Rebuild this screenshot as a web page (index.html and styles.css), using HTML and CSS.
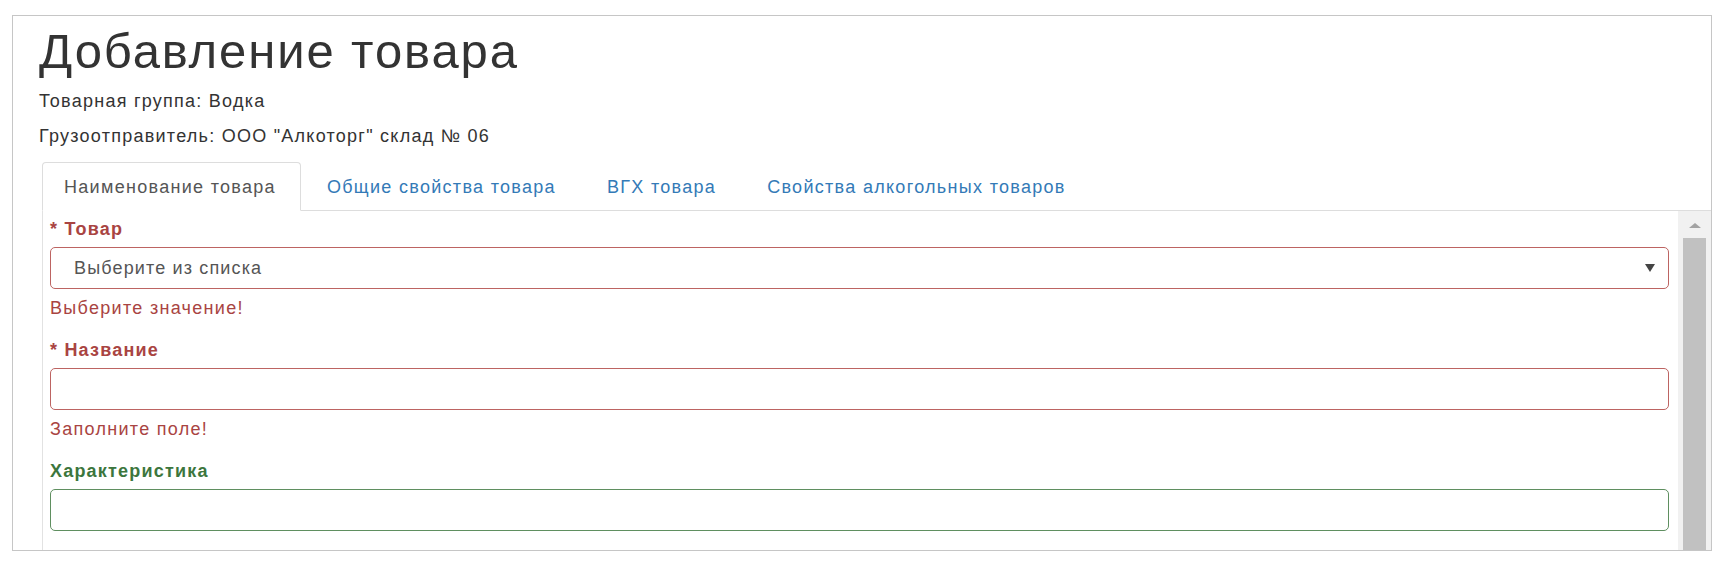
FILE: index.html
```html
<!DOCTYPE html>
<html lang="ru">
<head>
<meta charset="utf-8">
<title>Добавление товара</title>
<link rel="stylesheet" href="styles.css">
</head>
<body>
<div class="frame">
  <div class="header">
    <h1 class="title">Добавление товара</h1>
    <p class="meta meta-first">Товарная группа: Водка</p>
    <p class="meta meta-second">Грузоотправитель: ООО "Алкоторг" склад № 06</p>
  </div>
  <div class="tabs-area">
    <ul class="tabs">
      <li class="tab active"><a class="tab-link">Наименование товара</a></li>
      <li class="tab"><a class="tab-link">Общие свойства товара</a></li>
      <li class="tab"><a class="tab-link">ВГХ товара</a></li>
      <li class="tab"><a class="tab-link">Свойства алкогольных товаров</a></li>
    </ul>
    <div class="pane">
      <div class="pane-body">
        <div class="field has-error">
          <label class="field-label">* Товар</label>
          <div class="control select-control">
            <span class="placeholder">Выберите из списка</span>
            <span class="caret"></span>
          </div>
          <div class="help">Выберите значение!</div>
        </div>
        <div class="field has-error">
          <label class="field-label">* Название</label>
          <div class="control"></div>
          <div class="help">Заполните поле!</div>
        </div>
        <div class="field has-success">
          <label class="field-label">Характеристика</label>
          <div class="control"></div>
        </div>
      </div>
      <div class="scrollbar">
        <div class="scroll-up"><span class="scroll-arrow"></span></div>
        <div class="scroll-thumb"></div>
      </div>
    </div>
  </div>
</div>
</body>
</html>
```

FILE: styles.css
```css
* { box-sizing: border-box; }

html, body {
  margin: 0;
  padding: 0;
  background: #ffffff;
}

body {
  font-family: "Liberation Sans", Arial, sans-serif;
  color: #333333;
  width: 1724px;
  height: 564px;
  overflow: hidden;
}

.frame {
  margin: 15px 12px 0 12px;
  height: 536px;
  border: 1px solid #c6c6c6;
  display: flex;
  flex-direction: column;
  overflow: hidden;
}

.header {
  padding-left: 26px;
}

.title {
  margin: 8px 0 0 0;
  font-size: 49px;
  line-height: 54px;
  font-weight: normal;
  letter-spacing: 1.9px;
  color: #333333;
}

.meta {
  margin: 0;
  font-size: 18px;
  line-height: 20px;
  letter-spacing: 1.25px;
  color: #333333;
}

.meta-first { margin-top: 13px; }
.meta-second { margin-top: 15px; }

.tabs-area {
  margin-top: 16px;
  margin-left: 29px;
  flex: 1;
  display: flex;
  flex-direction: column;
  min-height: 0;
}

.tabs {
  list-style: none;
  margin: 0;
  padding: 0;
  display: flex;
  border-bottom: 1px solid #dddddd;
}

.tab {
  margin: 0 2px -1px 0;
}

.tab-link {
  display: block;
  padding: 14px 24px 13px 21px;
  font-size: 18px;
  line-height: 20px;
  letter-spacing: 1.3px;
  color: #337ab7;
  border: 1px solid transparent;
  border-radius: 4px 4px 0 0;
}

.tab.active .tab-link {
  color: #555555;
  background: #ffffff;
  border-color: #dddddd #dddddd transparent #dddddd;
}

.tab + .tab .tab-link {
  padding-left: 23px;
}

.pane {
  flex: 1;
  display: flex;
  border-left: 1px solid #e2e2e2;
  min-height: 0;
}

.pane-body {
  flex: 1;
  padding: 8px 9px 0 7px;
}

.field {
  margin-bottom: 22px;
}

.field-label {
  display: block;
  font-size: 18px;
  line-height: 20px;
  font-weight: bold;
  letter-spacing: 1.2px;
  margin-bottom: 8px;
}

.control {
  height: 42px;
  border: 1px solid #cccccc;
  border-radius: 5px;
  background: #ffffff;
}

.select-control {
  display: flex;
  align-items: center;
  justify-content: space-between;
  padding: 0 13px 0 23px;
}

.placeholder {
  font-size: 18px;
  line-height: 20px;
  letter-spacing: 1.15px;
  color: #555555;
}

.caret {
  width: 0;
  height: 0;
  border-left: 5px solid transparent;
  border-right: 5px solid transparent;
  border-top: 8px solid #444444;
}

.help {
  margin-top: 9px;
  font-size: 18px;
  line-height: 20px;
  letter-spacing: 1.3px;
}

.has-error .field-label,
.has-error .help { color: #a94442; }
.has-error .control { border-color: #bd6462; }

.has-success .field-label { color: #3c763d; }
.has-success .control { border-color: #5f8f60; }

.scrollbar {
  width: 33px;
  background: #f1f1f1;
  display: flex;
  flex-direction: column;
  align-items: center;
}

.scroll-up {
  height: 27px;
  width: 100%;
  display: flex;
  align-items: center;
  justify-content: center;
}

.scroll-arrow {
  width: 0;
  height: 0;
  border-left: 6px solid transparent;
  border-right: 6px solid transparent;
  border-bottom: 5px solid #a3a3a3;
  margin-top: 2px;
}

.scroll-thumb {
  flex: 1;
  width: 23px;
  background: #c1c1c1;
}
```
